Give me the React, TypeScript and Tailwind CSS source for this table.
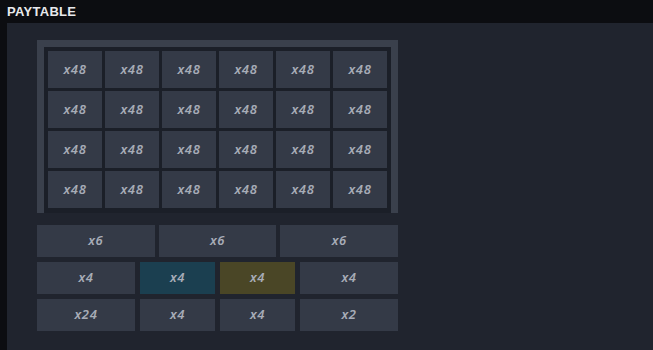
import React from "react";

type Tint = "plain" | "teal" | "olive";

const tintClass: Record<Tint, string> = {
  plain: "bg-[#343a47]",
  teal: "bg-[#1b3f50]",
  olive: "bg-[#4a4626]",
};

const Cell: React.FC<{ label: string; tint?: Tint }> = ({ label, tint = "plain" }) => (
  <div
    className={`${tintClass[tint]} flex items-center justify-center text-[13px] font-semibold italic text-[#a7acb7] tracking-[0.6px]`}
    style={{ fontFamily: '"Noto Sans", sans-serif' }}
  >
    {label}
  </div>
);

const bigGrid = Array.from({ length: 24 }, () => "x48");

const rowTwo: { label: string; tint: Tint }[] = [
  { label: "x4", tint: "plain" },
  { label: "x4", tint: "teal" },
  { label: "x4", tint: "olive" },
  { label: "x4", tint: "plain" },
];

const rowThree = ["x24", "x4", "x4", "x2"];

export default function App() {
  return (
    <div
      className="w-[653px] h-[350px] bg-[#0c0d11] flex flex-col overflow-hidden"
      style={{ fontFamily: '"Liberation Sans", Arial, sans-serif' }}
    >
      <div className="h-[23px] shrink-0 flex items-center px-[7px] text-[13px] font-bold text-[#e8e9ec] tracking-[0.3px]">
        PAYTABLE
      </div>

      <div className="flex-1 ml-[7px] bg-[#20242e] pl-[30px] pt-[17px]">
        <div className="w-[361px]">
          {/* framed multiplier board */}
          <div className="border-[7px] border-b-0 border-[#3a404c] bg-[#1b1f28] p-[4px] pb-[5px]">
            <div className="grid grid-cols-[repeat(6,54px)] auto-rows-[37px] gap-[3px]">
              {bigGrid.map((label, i) => (
                <Cell key={i} label={label} />
              ))}
            </div>
          </div>

          <div className="mt-[12px] flex flex-col gap-[5px]">
            <div className="grid grid-cols-3 gap-[4px] h-[32px]">
              <Cell label="x6" />
              <Cell label="x6" />
              <Cell label="x6" />
            </div>
            <div className="grid grid-cols-[98px_75px_75px_98px] gap-[5px] h-[32px]">
              {rowTwo.map((c, i) => (
                <Cell key={i} label={c.label} tint={c.tint} />
              ))}
            </div>
            <div className="grid grid-cols-[98px_75px_75px_98px] gap-[5px] h-[32px]">
              {rowThree.map((label, i) => (
                <Cell key={i} label={label} />
              ))}
            </div>
          </div>
        </div>
      </div>
    </div>
  );
}
